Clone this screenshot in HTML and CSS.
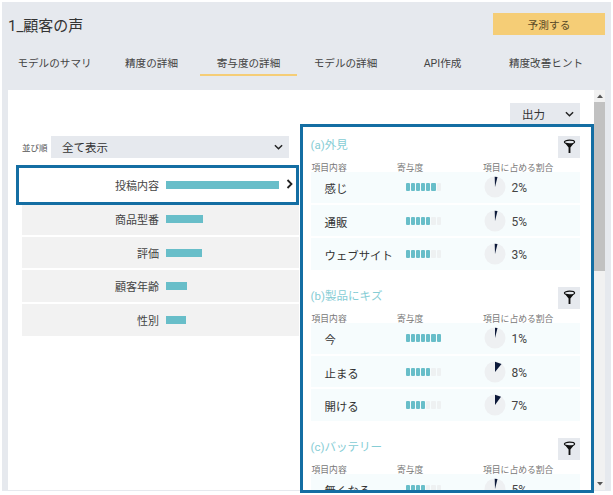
FILE: index.html
```html
<!DOCTYPE html>
<html lang="ja">
<head>
<meta charset="utf-8">
<title>顧客の声</title>
<link rel="stylesheet" href="styles.css">
</head>
<body>
<div class="app">
  <header class="head">
    <h1 class="title">1_顧客の声</h1>
    <button class="predict">予測する</button>
  </header>
  <nav class="tabs">
    <a class="tab">モデルのサマリ</a>
    <a class="tab">精度の詳細</a>
    <a class="tab active">寄与度の詳細</a>
    <a class="tab">モデルの詳細</a>
    <a class="tab">API作成</a>
    <a class="tab wide">精度改善ヒント</a>
  </nav>
  <div class="body">
    <main class="content">
      <div class="toolbar">
        <div class="output"><span>出力</span><svg class="chev" viewBox="0 0 10 6"><path d="M1 1l4 4 4-4"/></svg></div>
      </div>
      <div class="cols">
        <section class="left">
          <div class="sort">
            <span class="sort-label">並び順</span>
            <div class="select"><span>全て表示</span><svg class="chev" viewBox="0 0 10 6"><path d="M1 1l4 4 4-4"/></svg></div>
          </div>
          <div class="list">
            <div class="item selected"><span class="name">投稿内容</span><span class="bar" style="width:113px"></span>
              <svg class="arrow" viewBox="0 0 7 10"><path d="M1.5 1l4 4-4 4"/></svg></div>
            <div class="item"><span class="name">商品型番</span><span class="bar" style="width:37px"></span></div>
            <div class="item"><span class="name">評価</span><span class="bar" style="width:36px"></span></div>
            <div class="item"><span class="name">顧客年齢</span><span class="bar" style="width:21px"></span></div>
            <div class="item"><span class="name">性別</span><span class="bar" style="width:20px"></span></div>
          </div>
        </section>
        <section class="right">
          <div class="group">
            <div class="group-head"><h2 class="group-title">(a)外見</h2><button class="filter"><svg viewBox="0 0 14 16"><path class="f-ring" d="M1.500 3.200C1.500 2 4 1.200 7 1.200s5.500.8 5.500 2c0 1.200-2.500 2-5.500 2s-5.500-.8-5.500-2z"/><path class="f-stem" d="M3 5.300L6 9v6h2V9l3-3.700z"/></svg></button></div>
            <div class="cols-head"><span>項目内容</span><span>寄与度</span><span>項目に占める割合</span></div>
            <div class="row"><span class="word">感じ</span><span class="meter"><i class="on"></i><i class="on"></i><i class="on"></i><i class="on"></i><i class="on"></i><i class="on"></i><i></i></span><svg class="pie" viewBox="0 0 22 22"><circle cx="11" cy="11" r="10.500"/><path d="M11 11L10.700 .8 13.500 1z"/></svg><span class="pct">2%</span></div>
            <div class="row"><span class="word">通販</span><span class="meter"><i class="on"></i><i class="on"></i><i class="on"></i><i class="on"></i><i class="on"></i><i></i><i></i></span><svg class="pie" viewBox="0 0 22 22"><circle cx="11" cy="11" r="10.500"/><path d="M11 11L10.700 .8 13.500 1z"/></svg><span class="pct">5%</span></div>
            <div class="row"><span class="word">ウェブサイト</span><span class="meter"><i class="on"></i><i class="on"></i><i class="on"></i><i class="on"></i><i class="on"></i><i></i><i></i></span><svg class="pie" viewBox="0 0 22 22"><circle cx="11" cy="11" r="10.500"/><path d="M11 11L10.700 .8 13.500 1z"/></svg><span class="pct">3%</span></div>
          </div>
          <div class="group">
            <div class="group-head"><h2 class="group-title">(b)製品にキズ</h2><button class="filter"><svg viewBox="0 0 14 16"><path class="f-ring" d="M1.500 3.200C1.500 2 4 1.200 7 1.200s5.500.8 5.500 2c0 1.200-2.500 2-5.500 2s-5.500-.8-5.500-2z"/><path class="f-stem" d="M3 5.300L6 9v6h2V9l3-3.700z"/></svg></button></div>
            <div class="cols-head"><span>項目内容</span><span>寄与度</span><span>項目に占める割合</span></div>
            <div class="row"><span class="word">今</span><span class="meter"><i class="on"></i><i class="on"></i><i class="on"></i><i class="on"></i><i class="on"></i><i class="on"></i><i class="on"></i></span><svg class="pie" viewBox="0 0 22 22"><circle cx="11" cy="11" r="10.500"/><path d="M11 11L11 .8 13.500 1z"/></svg><span class="pct">1%</span></div>
            <div class="row"><span class="word">止まる</span><span class="meter"><i class="on"></i><i class="on"></i><i class="on"></i><i class="on"></i><i class="on"></i><i></i><i></i></span><svg class="pie" viewBox="0 0 22 22"><circle cx="11" cy="11" r="10.500"/><path d="M11 11L11 .8 17.500 3z"/></svg><span class="pct">8%</span></div>
            <div class="row"><span class="word">開ける</span><span class="meter"><i class="on"></i><i class="on"></i><i class="on"></i><i class="on"></i><i></i><i></i><i></i></span><svg class="pie" viewBox="0 0 22 22"><circle cx="11" cy="11" r="10.500"/><path d="M11 11L11 .8 17 2.800z"/></svg><span class="pct">7%</span></div>
          </div>
          <div class="group">
            <div class="group-head"><h2 class="group-title">(c)バッテリー</h2><button class="filter"><svg viewBox="0 0 14 16"><path class="f-ring" d="M1.500 3.200C1.500 2 4 1.200 7 1.200s5.500.8 5.500 2c0 1.200-2.500 2-5.500 2s-5.500-.8-5.500-2z"/><path class="f-stem" d="M3 5.300L6 9v6h2V9l3-3.700z"/></svg></button></div>
            <div class="cols-head"><span>項目内容</span><span>寄与度</span><span>項目に占める割合</span></div>
            <div class="row"><span class="word">無くなる</span><span class="meter"><i class="on"></i><i class="on"></i><i class="on"></i><i class="on"></i><i></i><i></i><i></i></span><svg class="pie" viewBox="0 0 22 22"><circle cx="11" cy="11" r="10.500"/><path d="M11 11L10.700 .8 13.500 1z"/></svg><span class="pct">5%</span></div>
          </div>
        </section>
      </div>
    </main>
    <div class="scrollbar">
      <svg class="sb-arrow" viewBox="0 0 6 4"><path d="M0 4l3-3.500L6 4z"/></svg>
      <div class="sb-track"><div class="sb-thumb"></div></div>
      <svg class="sb-arrow" viewBox="0 0 6 4"><path d="M0 0l3 3.500L6 0z"/></svg>
    </div>
  </div>
</div>
</body>
</html>
```
FILE: styles.css
```css
* { box-sizing: border-box; }
html, body { margin: 0; height: 100%; background: #fff; }
body {
  padding: 2px;
  font-family: "Roboto", "Noto Sans CJK JP", sans-serif;
  color: #444;
  overflow: hidden;
}
.app {
  height: 489px;
  background: #e6e9ee;
  display: flex;
  flex-direction: column;
}
.head {
  height: 41px;
  padding: 11px 6px 0 6px;
  display: flex;
  justify-content: space-between;
  align-items: flex-start;
}
.title {
  margin: 2px 0 0;
  font-size: 15px;
  font-weight: 400;
  line-height: 22px;
  color: #333;
}
.predict {
  width: 112px;
  height: 22px;
  border: 0;
  padding: 0;
  background: #f5cd76;
  color: #5a4a26;
  font: inherit;
  font-size: 10.700px;
}
.tabs {
  height: 47px;
  padding: 11px 0 0 4px;
  display: flex;
  align-items: flex-start;
}
.tab {
  width: 97px;
  height: 21.500px;
  line-height: 20px;
  text-align: center;
  font-size: 10.600px;
  color: #444;
}
.tab.active { border-bottom: 2.500px solid #f5cd76; }
.tab.wide { width: 110px; }
.body {
  flex: 1;
  min-height: 0;
  display: flex;
  margin: 0 7px 1px 6px;
}
.content {
  width: 586px;
  background: #fff;
  padding: 13px 0 0 14px;
  display: flex;
  flex-direction: column;
  min-height: 0;
}
.toolbar {
  display: flex;
  justify-content: flex-end;
  height: 21px;
  padding-right: 14px;
  flex: none;
}
.output {
  width: 70px;
  height: 21px;
  background: #e6e9ee;
  padding: 0 6px 0 12px;
  display: flex;
  align-items: center;
  justify-content: space-between;
  font-size: 11.500px;
  color: #333;
}
.chev { width: 9px; height: 6px; flex: none; }
.chev path { fill: none; stroke: #222; stroke-width: 1.600; }
.cols {
  flex: 1;
  min-height: 0;
  display: flex;
  gap: 1px;
  align-items: flex-start;
}
.left { width: 277px; flex: none; padding-top: 12px; }
.sort { display: flex; align-items: center; height: 22px; }
.sort-label { width: 29px; font-size: 8.500px; color: #555; white-space: nowrap; }
.select {
  width: 238px;
  height: 22px;
  background: #e6e9ee;
  padding: 0 6px 0 11px;
  display: flex;
  align-items: center;
  justify-content: space-between;
  font-size: 11.500px;
  color: #333;
}
.list {
  margin-top: 7px;
  display: flex;
  flex-direction: column;
  gap: 2px;
}
.item {
  height: 31.700px;
  background: #f2f2f2;
  display: flex;
  align-items: center;
  position: relative;
}
.item .name {
  width: 137px;
  text-align: right;
  font-size: 11px;
  color: #444;
  margin-right: 7px;
}
.bar { height: 8px; background: #68bec9; }
.selected {
  height: 40px;
  margin-left: -6px;
  margin-bottom: -4px;
  background: #fff;
  border: 3px solid #146ea3;
  padding-left: 3px;
  z-index: 1;
}
.arrow {
  position: absolute;
  right: 3px;
  top: 11px;
  width: 7px;
  height: 10px;
}
.arrow path { fill: none; stroke: #222; stroke-width: 1.800; }
.right {
  width: 294px;
  flex: none;
  height: 369px;
  border: 3.500px solid #146ea3;
  padding: 8.500px 11px 0 7.500px;
  overflow: hidden;
}
.group { margin-bottom: 17px; }
.group-head {
  display: flex;
  justify-content: space-between;
  align-items: flex-start;
  height: 22px;
}
.group-title {
  margin: 0;
  font-size: 11.500px;
  line-height: 18px;
  font-weight: 400;
  color: #86cdd5;
}
.filter {
  width: 22px;
  height: 22px;
  border: 0;
  padding: 0;
  background: #e6e9ee;
  display: flex;
  align-items: center;
  justify-content: center;
}
.filter svg { width: 13px; height: 15px; }
.f-ring { fill: #e6e9ee; stroke: #111; stroke-width: 1.300; }
.f-stem { fill: #111; }
.cols-head {
  margin-top: 3px;
  height: 11px;
  display: grid;
  grid-template-columns: 85.500px 86px auto;
  padding-left: 1px;
  font-size: 8.800px;
  line-height: 15px;
  color: #777;
  white-space: nowrap;
}
.row {
  height: 31.700px;
  background: #f6fcfd;
  display: flex;
  align-items: center;
  margin-bottom: 1.500px;
}
.word { width: 95px; padding: 2px 0 0 14px; font-size: 11.400px; color: #333; white-space: nowrap; }
.meter { width: 78px; display: flex; gap: 1px; }
.meter i {
  width: 4.200px;
  height: 8px;
  border-radius: 1px;
  background: #eef1f2;
}
.meter i.on { background: #68bec9; }
.pie { width: 22px; height: 22px; flex: none; }
.pie circle { fill: #eef0f2; }
.pie path { fill: #0d1a3a; }
.pct { margin-left: 6px; padding-top: 2px; font-size: 12px; color: #444; }
.scrollbar {
  width: 11px;
  flex: none;
  background: #f1f1f1;
  display: flex;
  flex-direction: column;
  align-items: center;
}
.sb-arrow { width: 6px; height: 4px; margin: 4px 0; flex: none; }
.sb-arrow path { fill: #555; }
.sb-track { flex: 1; width: 100%; }
.sb-thumb { height: 169px; background: #c1c1c1; }
```
